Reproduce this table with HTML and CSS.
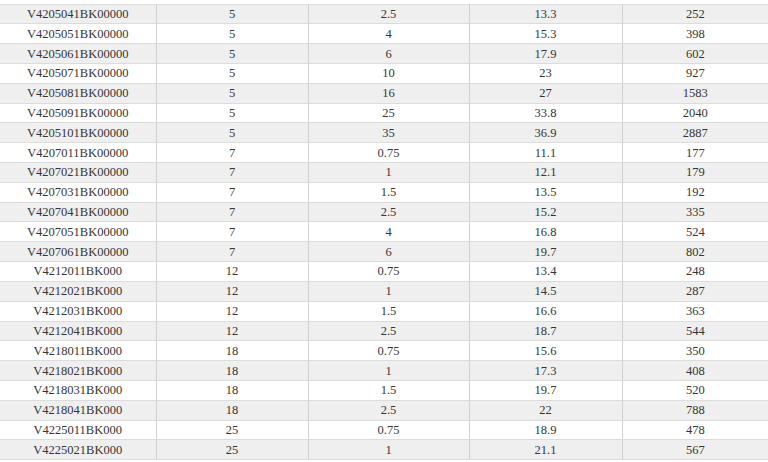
FILE: index.html
```html
<!DOCTYPE html>
<html>
<head>
<meta charset="utf-8">
<link rel="stylesheet" href="styles.css">
</head>
<body>
<div class="wrap">
<table class="spec">
<colgroup><col class="c1"><col class="c2"><col class="c3"><col class="c4"><col class="c5"></colgroup>
<tbody>
<tr><td>V4205041BK00000</td><td>5</td><td>2.5</td><td>13.3</td><td>252</td></tr>
<tr><td>V4205051BK00000</td><td>5</td><td>4</td><td>15.3</td><td>398</td></tr>
<tr><td>V4205061BK00000</td><td>5</td><td>6</td><td>17.9</td><td>602</td></tr>
<tr><td>V4205071BK00000</td><td>5</td><td>10</td><td>23</td><td>927</td></tr>
<tr><td>V4205081BK00000</td><td>5</td><td>16</td><td>27</td><td>1583</td></tr>
<tr><td>V4205091BK00000</td><td>5</td><td>25</td><td>33.8</td><td>2040</td></tr>
<tr><td>V4205101BK00000</td><td>5</td><td>35</td><td>36.9</td><td>2887</td></tr>
<tr><td>V4207011BK00000</td><td>7</td><td>0.75</td><td>11.1</td><td>177</td></tr>
<tr><td>V4207021BK00000</td><td>7</td><td>1</td><td>12.1</td><td>179</td></tr>
<tr><td>V4207031BK00000</td><td>7</td><td>1.5</td><td>13.5</td><td>192</td></tr>
<tr><td>V4207041BK00000</td><td>7</td><td>2.5</td><td>15.2</td><td>335</td></tr>
<tr><td>V4207051BK00000</td><td>7</td><td>4</td><td>16.8</td><td>524</td></tr>
<tr><td>V4207061BK00000</td><td>7</td><td>6</td><td>19.7</td><td>802</td></tr>
<tr><td>V4212011BK000</td><td>12</td><td>0.75</td><td>13.4</td><td>248</td></tr>
<tr><td>V4212021BK000</td><td>12</td><td>1</td><td>14.5</td><td>287</td></tr>
<tr><td>V4212031BK000</td><td>12</td><td>1.5</td><td>16.6</td><td>363</td></tr>
<tr><td>V4212041BK000</td><td>12</td><td>2.5</td><td>18.7</td><td>544</td></tr>
<tr><td>V4218011BK000</td><td>18</td><td>0.75</td><td>15.6</td><td>350</td></tr>
<tr><td>V4218021BK000</td><td>18</td><td>1</td><td>17.3</td><td>408</td></tr>
<tr><td>V4218031BK000</td><td>18</td><td>1.5</td><td>19.7</td><td>520</td></tr>
<tr><td>V4218041BK000</td><td>18</td><td>2.5</td><td>22</td><td>788</td></tr>
<tr><td>V4225011BK000</td><td>25</td><td>0.75</td><td>18.9</td><td>478</td></tr>
<tr><td>V4225021BK000</td><td>25</td><td>1</td><td>21.1</td><td>567</td></tr>
</tbody>
</table>
</div>
</body>
</html>
```
FILE: styles.css
```css
html, body {
  margin: 0;
  padding: 0;
  background: #ffffff;
  overflow: hidden;
}
.wrap {
  padding-top: 3.5px;
  width: 768px;
}
.spec {
  border-collapse: collapse;
  table-layout: fixed;
  width: 768px;
  font-family: "Liberation Serif", "Times New Roman", serif;
  font-size: 12.5px;
  color: #353535;
  border-top: 1px solid #dcdcdc;
}
.c1 { width: 156px; }
.c2 { width: 152px; }
.c3 { width: 161px; }
.c4 { width: 153px; }
.c5 { width: 146px; }
.spec td {
  height: 18.82px;
  padding: 0;
  text-align: center;
  vertical-align: middle;
  border-bottom: 1px solid #dcdcdc;
  border-left: 1px solid #d0d0d0;
  line-height: 14px;
}
.spec td:first-child {
  border-left: none;
}
.spec tr:nth-child(odd) td {
  background: #efefef;
}
.spec tr:nth-child(even) td {
  background: #ffffff;
}
```
